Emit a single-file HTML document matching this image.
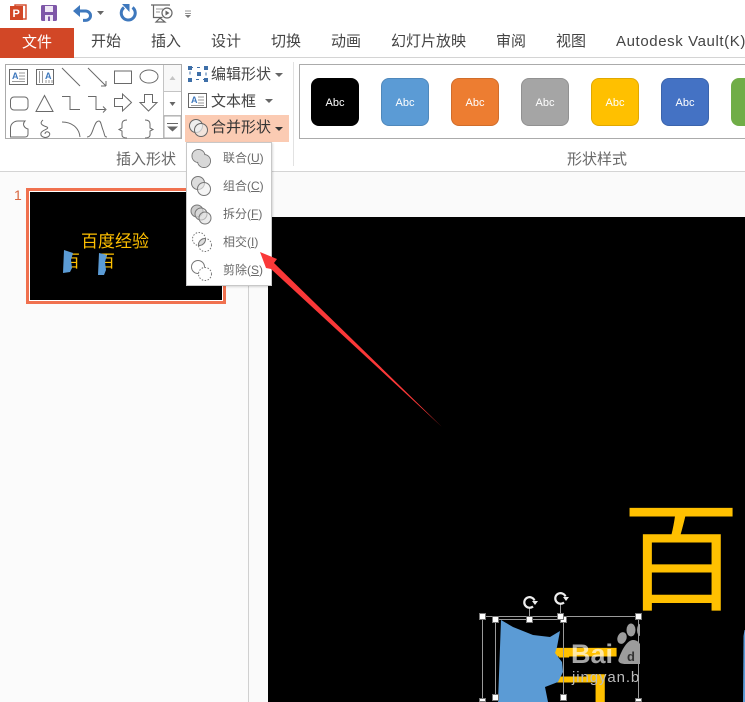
<!DOCTYPE html>
<html lang="zh"><head><meta charset="utf-8">
<style>
html,body{margin:0;padding:0;height:702px;overflow:hidden}
body{width:745px;position:relative;background:#fff;font-family:"Liberation Sans","Noto Sans CJK SC",sans-serif;color:#444}
.a{position:absolute;white-space:nowrap}
.tab{position:absolute;top:31px;font-size:15px;line-height:22px;color:#444;white-space:nowrap}
.sw{position:absolute;top:78px;width:48px;height:48px;border-radius:8px;color:#fff;font-size:11px;line-height:48px;text-align:center;box-sizing:border-box;border:1px solid rgba(0,0,0,.12)}
.cmd{position:absolute;left:211px;font-size:15px;line-height:20px;color:#444;white-space:nowrap}
.mi{position:absolute;left:223px;font-size:12px;line-height:16px;color:#6a6a6a;white-space:nowrap}
.big{position:absolute;font-size:118px;color:#FFC000;font-family:"Noto Sans CJK SC",sans-serif;white-space:nowrap}
</style></head><body>

<!-- panes -->
<div class="a" style="left:0;top:172px;width:248px;height:530px;background:#fbfbfb"></div>
<div class="a" style="left:248px;top:172px;width:1px;height:530px;background:#d0d0d0"></div>
<div class="a" style="left:249px;top:172px;width:19px;height:530px;background:#fafafa"></div>
<div class="a" style="left:268px;top:172px;width:477px;height:45px;background:#fafafa"></div>
<div class="a" style="left:268px;top:217px;width:477px;height:485px;background:#000;overflow:hidden">
  <div class="big" style="left:354px;top:274px;line-height:118px;height:118px">百</div>
  <div class="big" style="left:238px;top:461px;line-height:24px;height:24px">百</div>
</div>

<!-- QAT -->
<svg class="a" style="left:0;top:0" width="200" height="28" viewBox="0 0 200 28">
  <rect x="15" y="5" width="11" height="14" fill="#fff" stroke="#D24726" stroke-width="1.4"/>
  <rect x="10" y="6" width="13" height="14" fill="#D24726"/>
  <text x="12.5" y="17" font-size="11" font-weight="700" fill="#fff" font-family="Liberation Sans">P</text>
  <rect x="41" y="5" width="16" height="16" rx="1.5" fill="#7E57A8"/>
  <rect x="45" y="6" width="8" height="6" fill="#efe8f5"/>
  <rect x="45" y="15" width="8" height="6" fill="#efe8f5"/>
  <rect x="48" y="16.500" width="2" height="4.500" fill="#7E57A8"/>
  <path d="M77 11H85.500a5 4.700 0 0 1 0 9.400H83" fill="none" stroke="#3E78BD" stroke-width="3"/>
  <path d="M73 11 80 5v12z" fill="#3E78BD"/>
  <path d="M97 11h7l-3.500 4z" fill="#666"/>
  <path d="M124 7.500a7 7 0 1 0 8.500 0" fill="none" stroke="#3E78BD" stroke-width="3"/>
  <path d="M122 4h7.500v8z" fill="#3E78BD"/>
  <path d="M151 5h19M153.500 5v12.500h9M160 18l-4 4h9z" fill="none" stroke="#666" stroke-width="1.200"/>
  <path d="M156 9h7M156 12h4" stroke="#999" stroke-width="1"/>
  <circle cx="167" cy="13" r="5" fill="#fff" stroke="#666" stroke-width="1.200"/>
  <path d="M165.500 10.500l4 2.500-4 2.500z" fill="#666"/>
  <path d="M185 11h6M185 13.500h6" stroke="#777" stroke-width=".8" fill="none"/><path d="M185 15h6l-3 3z" fill="#777"/>
</svg>

<!-- tabs -->
<div class="a" style="left:0;top:28px;width:74px;height:30px;background:#D24726;color:#fff;font-size:15px;line-height:30px;text-align:center">文件</div>
<div class="tab" style="left:91px">开始</div>
<div class="tab" style="left:151px">插入</div>
<div class="tab" style="left:211px">设计</div>
<div class="tab" style="left:271px">切换</div>
<div class="tab" style="left:331px">动画</div>
<div class="tab" style="left:391px">幻灯片放映</div>
<div class="tab" style="left:496px">审阅</div>
<div class="tab" style="left:556px">视图</div>
<div class="a" style="left:616px;top:31px;width:129px;overflow:hidden;font-size:15px;line-height:22px;color:#444;letter-spacing:.6px">Autodesk Vault(K)</div>
<div class="a" style="left:74px;top:57px;width:671px;height:1px;background:#d4d4d4"></div>
<div class="a" style="left:0;top:171px;width:745px;height:1px;background:#d4d4d4"></div>

<!-- shape gallery -->
<svg class="a" style="left:0;top:60px" width="186" height="84" viewBox="0 60 186 84" fill="none" stroke="#6a6a6a" stroke-width="1">
  <rect x="5.500" y="64.500" width="176" height="74" stroke="#ababab" fill="#fff"/>
  <rect x="164" y="65" width="17" height="26" fill="#f8f8f8" stroke="none"/>
  <path d="M163.500 65v73M164 91.500h17M164 115.500h17" stroke="#c4c4c4"/>
  <rect x="164" y="116" width="17" height="22" stroke="#ababab"/>
  <rect x="9.500" y="69.500" width="18" height="15"/>
  <path d="M19 73h6M19 76h6M19 79h6M12 81.500h13" stroke="#999"/>
  <text x="12" y="79" font-size="9" font-weight="700" fill="#3E78BD" stroke="none" font-family="Liberation Sans">A</text>
  <rect x="36.500" y="69.500" width="17" height="15"/>
  <path d="M39.500 71v12M42.500 71v12M46 80v3M49 80v3M52 80v3" stroke="#999"/>
  <text x="45" y="79" font-size="9" font-weight="700" fill="#3E78BD" stroke="none" font-family="Liberation Sans">A</text>
  <path d="M62 68 80 86M88 68l18 18"/><path d="M106 86v-5M106 86h-5"/>
  <rect x="114.500" y="71" width="17" height="12.500"/>
  <ellipse cx="149" cy="76.500" rx="9" ry="6.500"/>
  <rect x="10.500" y="97" width="17.500" height="13" rx="3.500"/>
  <path d="M44.500 95.500 36 111.500H53z"/>
  <path d="M62 96.500h8v13h10M88 96.500h8v13h9M103 106.500l3 3-3 3"/>
  <path d="M114.500 98.500h8v-4.500l9 8.500-9 8.500v-4.500h-8z"/>
  <path d="M144.500 94.500h8v8h4.500l-8.500 8.500-8.500-8.500h4.500z"/>
  <path d="M10.500 137V128C10.500 124 14 121 18 121H25C22 124 24 128 28 129V134Q28 137 25 137z"/>
  <path d="M43 120C38 124 44 126 47 127 50 129 42 130 41 133 40 137 46 139 49 136 52 132 45 130 45 134"/>
  <path d="M62 122C71 122 79 127 80 137M87 137C91 137 92 132 94 127S97 121 99 121 101 125 103 130 104 137 107 137"/>
  <path d="M127 120C124 120 122 121 122 124V128L119 129.500 122 131V135C122 137 124 138 127 138M145 120C148 120 150 121 150 124V128L153 129.500 150 131V135C150 137 148 138 145 138"/>
  <path d="M169.500 80h6l-3-4z" stroke="none" fill="#c4c4c4"/>
  <path d="M169.500 102h6l-3 4z" stroke="none" fill="#666"/>
  <path d="M167 123.500h11" stroke="#666"/><path d="M167 126.500h11l-5.500 5z" fill="#666" stroke="none"/>
</svg>

<!-- edit commands -->
<svg class="a" style="left:186px;top:62px" width="24" height="80" viewBox="186 62 24 80" fill="none">
  <path d="M190 67.500h16v12h-16z" stroke="#3E6FA8" stroke-width="1" stroke-dasharray="3 4"/>
  <rect x="188" y="66" width="4" height="4" fill="#3E6FA8"/><rect x="204" y="66" width="4" height="4" fill="#3E6FA8"/>
  <rect x="188" y="78" width="4" height="4" fill="#3E6FA8"/><rect x="197" y="72" width="4" height="4" fill="#3E6FA8"/><rect x="204" y="78" width="4" height="4" fill="#3E6FA8"/>
  <rect x="188.500" y="93.500" width="18" height="14" stroke="#666"/>
  <path d="M198 97h6M198 100h6M198 103h6M191 105.500h13" stroke="#999"/>
  <text x="191" y="103" font-size="9" font-weight="700" fill="#3E78BD" font-family="Liberation Sans">A</text>
</svg>
<div class="cmd" style="top:65px">编辑形状</div>
<div class="a" style="left:275px;top:73px;width:0;height:0;border:4px solid transparent;border-top:4px solid #666"></div>
<div class="cmd" style="top:92px">文本框</div>
<div class="a" style="left:265px;top:99px;width:0;height:0;border:4px solid transparent;border-top:4px solid #666"></div>
<div class="a" style="left:185px;top:115px;width:104px;height:27px;background:#FBCBB3"></div>
<svg class="a" style="left:188px;top:118px" width="22" height="22" fill="none" stroke="#666">
  <circle cx="8" cy="8" r="6.500" fill="#eee"/><circle cx="13" cy="12" r="6.500" fill="#eee" fill-opacity=".7"/>
</svg>
<div class="cmd" style="top:118px;color:#333">合并形状</div>
<div class="a" style="left:275px;top:127px;width:0;height:0;border:4px solid transparent;border-top:4px solid #333"></div>
<div class="a" style="left:293px;top:62px;width:1px;height:104px;background:#e2e2e2"></div>
<div class="a" style="left:116px;top:150px;font-size:15px;line-height:20px;color:#666">插入形状</div>
<div class="a" style="left:567px;top:150px;font-size:15px;line-height:20px;color:#666">形状样式</div>

<!-- styles gallery -->
<div class="a" style="left:299px;top:64px;width:446px;height:73px;border:1px solid #ababab;border-right:0"></div>
<div class="sw" style="left:311px;background:#000">Abc</div>
<div class="sw" style="left:381px;background:#5B9BD5">Abc</div>
<div class="sw" style="left:451px;background:#ED7D31">Abc</div>
<div class="sw" style="left:521px;background:#A5A5A5">Abc</div>
<div class="sw" style="left:591px;background:#FFC000">Abc</div>
<div class="sw" style="left:661px;background:#4472C4">Abc</div>
<div class="a" style="left:731px;top:78px;width:14px;height:48px;background:#70AD47;border-radius:8px 0 0 8px"></div>

<!-- thumbnail -->
<div class="a" style="left:14px;top:186px;font-size:14px;line-height:18px;color:#D9663F">1</div>
<div class="a" style="left:26px;top:188px;width:194px;height:110px;border:3px solid #F0714F;background:#000;box-shadow:inset 0 0 0 1px #fff;overflow:hidden">
  <div class="a" style="left:52px;top:40px;font-size:17px;line-height:22px;color:#FFC000">百度经验</div>
  <div class="a" style="left:34px;top:60px;font-size:17px;line-height:22px;color:#FFC000">百</div>
  <div class="a" style="left:69px;top:60px;font-size:17px;line-height:22px;color:#FFC000">百</div>
</div>
<svg class="a" style="left:26px;top:188px" width="200" height="116" viewBox="26 188 200 116">
  <path d="M64 250 73 253 71 260 72 268 70 272 63 273zM99 253 107 255 105 262 106 270 104 275 98 275z" fill="#5B9BD5"/>
</svg>

<!-- dropdown -->
<div class="a" style="left:186px;top:142px;width:84px;height:142px;background:#fff;border:1px solid #c8c8c8;box-shadow:1px 1px 2px rgba(0,0,0,.15)"></div>
<svg class="a" style="left:186px;top:142px" width="40" height="144" fill="none" stroke="#777" stroke-width="1">
  <circle cx="12.500" cy="14" r="6.500"/><circle cx="18" cy="19" r="6.500"/>
  <circle cx="12.500" cy="14" r="6" fill="#d8d8d8" stroke="none"/><circle cx="18" cy="19" r="6" fill="#d8d8d8" stroke="none"/>
  <circle cx="12" cy="41" r="6.500" fill="#ddd"/><circle cx="18" cy="47" r="6.500" fill="#eee" fill-opacity=".6"/>
  <circle cx="11" cy="69" r="6" fill="#ccc"/><circle cx="15" cy="72" r="6" fill="#ddd" fill-opacity=".6"/><circle cx="19" cy="76" r="6" fill="#ddd" fill-opacity=".6"/>
  <g stroke-dasharray="1.500 1.500"><circle cx="13" cy="97" r="6.500"/><circle cx="19" cy="103" r="6.500"/></g>
  <path d="M12.500 103.500A6.500 6.500 0 0 1 19.500 96.500 6.500 6.500 0 0 1 12.500 103.500z" fill="#ddd"/>
  <circle cx="12" cy="125" r="6.500"/><circle cx="19" cy="132" r="6.500" fill="#fff" stroke-dasharray="1.500 1.500"/>
</svg>
<div class="mi" style="top:150px">联合(<u>U</u>)</div>
<div class="mi" style="top:178px">组合(<u>C</u>)</div>
<div class="mi" style="top:206px">拆分(<u>F</u>)</div>
<div class="mi" style="top:234px">相交(<u>I</u>)</div>
<div class="mi" style="top:262px">剪除(<u>S</u>)</div>

<!-- red arrow -->
<svg class="a" style="left:0;top:0" width="745" height="702">
  <path d="M260 252 277 259 274 263 442 427 271 269 266 268z" fill="#FA3838"/>
</svg>

<!-- selected shapes -->
<svg class="a" style="left:0;top:0" width="745" height="702" viewBox="0 0 745 702">
  <rect x="555" y="657.500" width="32" height="19" fill="#000"/>
  <path d="M501 620 513 627 533 635 550 637 560 631 557 647 555 653 562 662 563 672 558 682 545 687 548 702H498z" fill="#5B9BD5"/>
  <path d="M743.500 636 744.500 630H745V702H743z" fill="#5B9BD5"/>
  <path d="M482.500 616.500h156M482.500 616.500v85M638.500 616.500v85M495.500 619.500h68M495.500 619.500v78M563.500 619.500v78M529.500 607v12M560.500 603v13" fill="none" stroke="#9a9a9a"/>
  <g fill="none" stroke="#eee" stroke-width="2.200"><path d="M534.500 600.500A5.300 5.300 0 1 0 533 606.500"/><path d="M565.500 596.500A5.300 5.300 0 1 0 564 602.500"/></g>
  <path d="M532 601h6l-3 4zM563 597h6l-3 4z" fill="#eee"/>
  <g fill="#fff" stroke="#777"><rect x="479.500" y="613.500" width="6" height="6"/><rect x="635.500" y="613.500" width="6" height="6"/><rect x="492.500" y="616.500" width="6" height="6"/><rect x="560.500" y="616.500" width="6" height="6"/><rect x="526.500" y="616.500" width="6" height="6"/><rect x="557.500" y="613.500" width="6" height="6"/><rect x="492.500" y="694.500" width="6" height="6"/><rect x="560.500" y="694.500" width="6" height="6"/><rect x="479.500" y="698.500" width="6" height="3"/><rect x="635.500" y="698.500" width="6" height="3"/></g>
  <svg x="0" y="0" width="640" height="702" viewBox="0 0 640 702">
    <g fill="#9c9c9c"><ellipse cx="622" cy="638" rx="4.500" ry="6" transform="rotate(20 622 638)"/><ellipse cx="631" cy="630" rx="4.500" ry="6.500"/><ellipse cx="640" cy="630" rx="3" ry="6"/><path d="M619 658C622 650 627 640 633 640S642 645 642 654V664H626C620 664 617 662 619 658z"/></g>
    <text x="627" y="661" font-size="13" font-weight="700" fill="#333" font-family="Liberation Sans">d</text>
    <text x="571" y="663" font-size="27" font-weight="700" fill="#fff" fill-opacity=".65" font-family="Liberation Sans">Bai</text>
    <text x="572" y="682" font-size="15" fill="#bbb" font-family="Liberation Sans" letter-spacing=".9">jingyan.b</text>
  </svg>
</svg>
</body></html>
